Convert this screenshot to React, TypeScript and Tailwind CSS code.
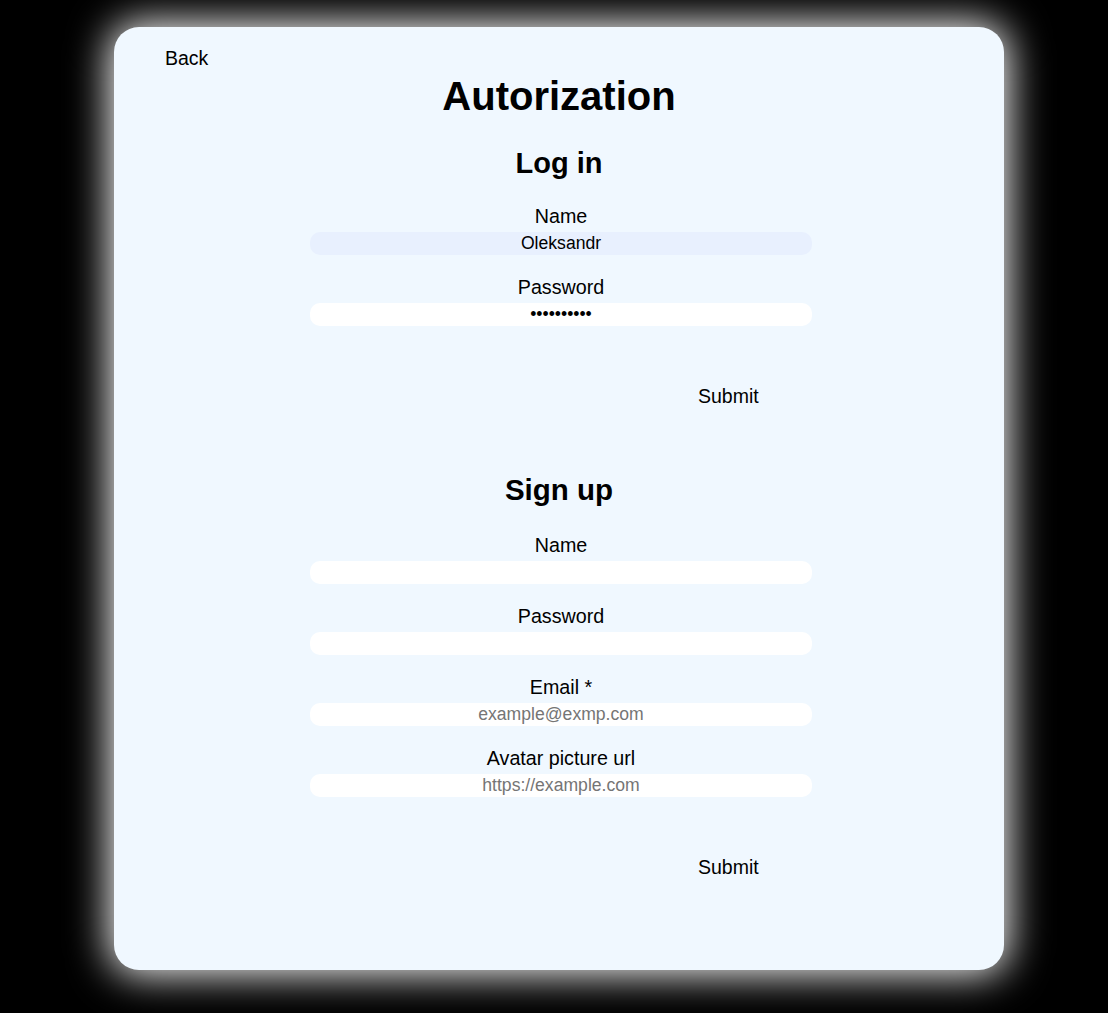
import type { ReactNode } from 'react';

const font = { fontFamily: '"Liberation Sans", Arial, sans-serif' };

function Field({
  label,
  value,
  placeholder,
  type = 'text',
  autofill = false,
  className = '',
}: {
  label: string;
  value?: string;
  placeholder?: string;
  type?: string;
  autofill?: boolean;
  className?: string;
}) {
  return (
    <label className={`flex flex-col items-stretch ${className}`}>
      <span className="h-[23px] text-center text-[19.7px] leading-[23px] text-black">{label}</span>
      <input
        type={type}
        defaultValue={value}
        placeholder={placeholder}
        readOnly
        className={`mt-[4px] h-[23px] w-full rounded-[10px] border-0 px-2 text-center text-[17.6px] leading-[23px] text-black outline-none placeholder:text-[#757575] ${
          autofill ? 'bg-[#e8f0fe]' : 'bg-white'
        }`}
      />
    </label>
  );
}

function SubmitButton({ className = '' }: { className?: string }) {
  return (
    <button className={`ml-[388px] h-[23px] w-fit bg-transparent text-[19.5px] leading-[23px] text-black ${className}`}>
      Submit
    </button>
  );
}

function Section({ children }: { children: ReactNode }) {
  return <div className="ml-[196px] flex w-[502px] flex-col">{children}</div>;
}

export default function App() {
  return (
    <div className="min-h-[1013px] bg-black pt-[27px] pb-[43px]" style={font}>
      <div className="ml-[114px] flex h-[943px] w-[890px] flex-col rounded-[25px] bg-[#f0f8ff] shadow-[0_0_40px_4px_#ffffff]">
        <button className="ml-[51px] mt-[20px] h-[23px] w-fit bg-transparent text-[19.5px] leading-[23px] text-black">
          Back
        </button>
        <h1 className="mt-[3px] text-center text-[40px] font-bold leading-[46px] text-black">Autorization</h1>
        <h2 className="mt-[27px] text-center text-[29px] font-bold leading-[34px] text-black">Log in</h2>

        <Section>
          <Field label="Name" value="Oleksandr" autofill className="mt-[25px]" />
          <Field label="Password" type="password" value="1234567890" className="mt-[21px]" />
          <SubmitButton className="mt-[59px]" />
        </Section>

        <h2 className="mt-[65px] text-center text-[29.5px] font-bold leading-[34px] text-black">Sign up</h2>

        <Section>
          <Field label="Name" className="mt-[27px]" />
          <Field label="Password" className="mt-[21px]" />
          <Field label="Email *" placeholder="example@exmp.com" className="mt-[21px]" />
          <Field label="Avatar picture url" placeholder="https://example.com" className="mt-[21px]" />
          <SubmitButton className="mt-[59px]" />
        </Section>
      </div>
    </div>
  );
}
